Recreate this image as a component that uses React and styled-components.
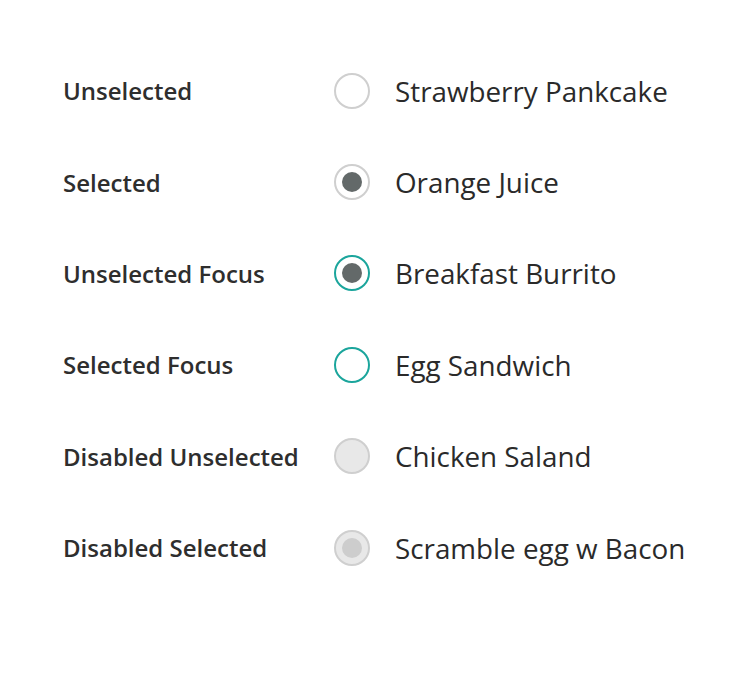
import React from "react";
import styled, { createGlobalStyle, css } from "styled-components";

const Global = createGlobalStyle`
  html, body { margin: 0; padding: 0; background: #ffffff; }
  body { font-family: "Open Sans", "Noto Sans", sans-serif; color: #2a2a2a; }
`;

const Page = styled.div`
  padding: 45px 0 0 63px;
  display: flex;
  flex-direction: column;
`;

const Row = styled.div`
  display: grid;
  grid-template-columns: 246px 36px auto;
  column-gap: 25px;
  align-items: center;
  height: 91.4px;
`;

const Label = styled.span`
  font-size: 24px;
  font-weight: 600;
  color: #2e2e2e;
  white-space: nowrap;
`;

const Circle = styled.span`
  box-sizing: border-box;
  width: 36px;
  height: 36px;
  border-radius: 50%;
  border: 2px solid ${(p) => (p.$focus ? "#1ba59c" : "#cfcfcf")};
  background: ${(p) => (p.$disabled ? "#e8e8e8" : "#ffffff")};
  display: flex;
  align-items: center;
  justify-content: center;
  ${(p) =>
    p.$checked &&
    css`
      &::after {
        content: "";
        width: 20px;
        height: 20px;
        border-radius: 50%;
        background: ${p.$disabled ? "#cdcdcd" : "#636969"};
      }
    `}
`;

const Text = styled.span`
  font-size: 27.8px;
  font-weight: 400;
  color: #2a2a2a;
  white-space: nowrap;
`;

const rows = [
  { label: "Unselected", text: "Strawberry Pankcake" },
  { label: "Selected", text: "Orange Juice", checked: true },
  { label: "Unselected Focus", text: "Breakfast Burrito", checked: true, focus: true },
  { label: "Selected Focus", text: "Egg Sandwich", focus: true },
  { label: "Disabled Unselected", text: "Chicken Saland", disabled: true },
  { label: "Disabled Selected", text: "Scramble egg w Bacon", disabled: true, checked: true },
];

export default function App() {
  return (
    <>
      <Global />
      <Page>
        {rows.map((r) => (
          <Row key={r.label}>
            <Label>{r.label}</Label>
            <Circle $checked={r.checked} $focus={r.focus} $disabled={r.disabled} />
            <Text>{r.text}</Text>
          </Row>
        ))}
      </Page>
    </>
  );
}
